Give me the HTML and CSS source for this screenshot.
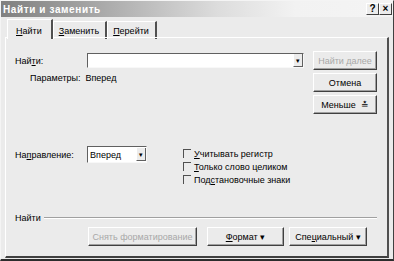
FILE: index.html
```html
<!DOCTYPE html>
<html lang="ru">
<head>
  <meta charset="UTF-8">
  <title>Найти и заменить</title>
  <link rel="stylesheet" href="styles.css">
</head>
<body>
  <div class="window">
    <!-- Title bar -->
    <div class="titlebar">
      <span class="title">Найти и заменить</span>
      <div class="caption-btns">
        <span class="cap-btn">?</span>
        <span class="cap-btn">×</span>
      </div>
    </div>

    <!-- Tabs -->
    <div class="tabs">
      <div class="tab active"><u>Н</u>айти</div>
      <div class="tab"><u>З</u>аменить</div>
      <div class="tab"><u>П</u>ерейти</div>
    </div>

    <div class="panel">
      <div class="top">
        <div class="main">
          <div class="find-row">
            <label class="lbl">Най<u>т</u>и:</label>
            <div class="combo wide">
              <span class="combo-text"></span>
              <span class="combo-arrow">▾</span>
            </div>
          </div>
          <div class="params">Параметры:&nbsp; Вперед</div>
        </div>
        <div class="side-btns">
          <button class="btn disabled">Найти далее</button>
          <button class="btn">Отмена</button>
          <button class="btn">Меньше&nbsp; <span class="less-icon">≛</span></button>
        </div>
      </div>

      <div class="options">
        <div class="dir-row">
          <label class="lbl">На<u>п</u>равление:</label>
          <div class="combo narrow">
            <span class="combo-text">Вперед</span>
            <span class="combo-arrow">▾</span>
          </div>
        </div>
        <div class="checks">
          <div class="check"><span class="box"></span><span><u>У</u>читывать регистр</span></div>
          <div class="check"><span class="box"></span><span><u>Т</u>олько слово целиком</span></div>
          <div class="check"><span class="box"></span><span>Под<u>с</u>тановочные знаки</span></div>
        </div>
      </div>

      <div class="group-label">
        <span>Найти</span>
        <span class="rule"></span>
      </div>

      <div class="bottom-btns">
        <button class="btn disabled w-clear">Снять форматирование</button>
        <button class="btn w-format"><u>Ф</u>ормат ▾</button>
        <button class="btn w-special">Спе<u>ц</u>иальный ▾</button>
      </div>
    </div>
  </div>
</body>
</html>
```

FILE: styles.css
```css
* {
  box-sizing: border-box;
}

body {
  margin: 0;
  font-family: "Liberation Sans", Arial, sans-serif;
  font-size: 9px;
  color: #000;
  background: #ebebeb;
}

u {
  text-decoration: underline;
  text-underline-offset: 1px;
}

.window {
  width: 394px;
  height: 261px;
  background: #ebebeb;
  border-top: 1px solid #f4f4f4;
  border-left: 1px solid #f4f4f4;
  border-right: 1px solid #404040;
  border-bottom: 2px solid #2c2c2c;
  display: flex;
  flex-direction: column;
}

/* Title bar */
.titlebar {
  height: 16px;
  background: linear-gradient(to right, #808080 0%, #a8a8a8 25%, #dcdcdc 55%, #f2f2f2 75%, #f4f4f4 100%);
  display: flex;
  align-items: center;
  justify-content: space-between;
  padding: 0 1px 0 2px;
}

.title {
  color: #fff;
  font-weight: bold;
  font-size: 10px;
  letter-spacing: 0.6px;
}

.caption-btns {
  display: flex;
}

.cap-btn {
  width: 13px;
  height: 12px;
  background: #ececec;
  border: 1px solid;
  border-color: #fff #404040 #404040 #fff;
  font-size: 10px;
  font-weight: bold;
  line-height: 10px;
  text-align: center;
}

/* Tabs */
.tabs {
  display: flex;
  padding: 3px 0 0 6px;
  height: 21px;
}

.tab {
  height: 18px;
  margin-top: 1px;
  padding: 4px 6px 0 5px;
  border-top: 1px solid #fff;
  border-left: 1px solid #fff;
  border-right: 2px solid #505050;
  background: #ebebeb;
}

.tab.active {
  height: 20px;
  margin-top: -1px;
  padding: 6px 9px 0 8px;
  position: relative;
  z-index: 1;
}

/* Panel */
.panel {
  flex: 1;
  margin: -1px 4px 1px 4px;
  border-top: 1px solid #fff;
  border-left: 1px solid #fff;
  border-right: 2px solid #505050;
  border-bottom: 2px solid #404040;
  padding: 13px 10px 0 9px;
  display: flex;
  flex-direction: column;
}

.top {
  display: flex;
  gap: 9px;
}

.main {
  flex: 1;
}

.find-row,
.dir-row {
  display: flex;
  align-items: center;
}

.find-row {
  margin-top: 2px;
}

.lbl {
  width: 72px;
}

.combo {
  height: 15px;
  background: #fff;
  border-top: 1px solid #606060;
  border-left: 1px solid #606060;
  border-right: 1px solid #f8f8f8;
  border-bottom: 1px solid #f8f8f8;
  display: flex;
  align-items: center;
  justify-content: space-between;
  padding-left: 2px;
}

.combo.wide {
  width: 217px;
}

.combo.narrow {
  width: 60px;
  height: 17px;
}

.combo-arrow {
  width: 10px;
  height: 13px;
  font-size: 7px;
  line-height: 13px;
  text-align: center;
  background: #ececec;
  border-left: 1px solid #fff;
  border-right: 1px solid #606060;
  border-bottom: 1px solid #606060;
}

.params {
  margin: 5px 0 0 15px;
}

.side-btns {
  display: flex;
  flex-direction: column;
  gap: 3px;
}

.btn {
  font-family: inherit;
  font-size: 9px;
  color: #000;
  height: 19px;
  width: 64px;
  padding: 0;
  background: #ebebeb;
  border: 1px solid;
  border-color: #fff #404040 #404040 #fff;
  box-shadow: inset -1px -1px 0 #a0a0a0;
}

.btn.disabled {
  color: #a8a8a8;
}

.less-icon {
  font-size: 9px;
}

/* Options */
.options {
  display: flex;
  margin-top: 32px;
  gap: 36px;
}

.dir-row {
  align-self: flex-start;
}

.checks {
  display: flex;
  flex-direction: column;
  gap: 2px;
  margin-top: 2px;
}

.check {
  display: flex;
  align-items: center;
  gap: 3px;
  height: 11px;
}

.box {
  width: 8px;
  height: 9px;
  border-top: 1px solid #505050;
  border-left: 1px solid #505050;
}

/* Bottom group */
.group-label {
  display: flex;
  align-items: center;
  gap: 3px;
  margin-top: 28px;
}

.rule {
  flex: 1;
  height: 2px;
  border-top: 1px solid #a0a0a0;
  border-bottom: 1px solid #fff;
}

.bottom-btns {
  display: flex;
  margin: 4px 0 0 73px;
}

.w-clear {
  width: 109px;
  margin-right: 10px;
}

.w-format {
  width: 77px;
  margin-right: 5px;
}

.w-special {
  width: 78px;
}
```
